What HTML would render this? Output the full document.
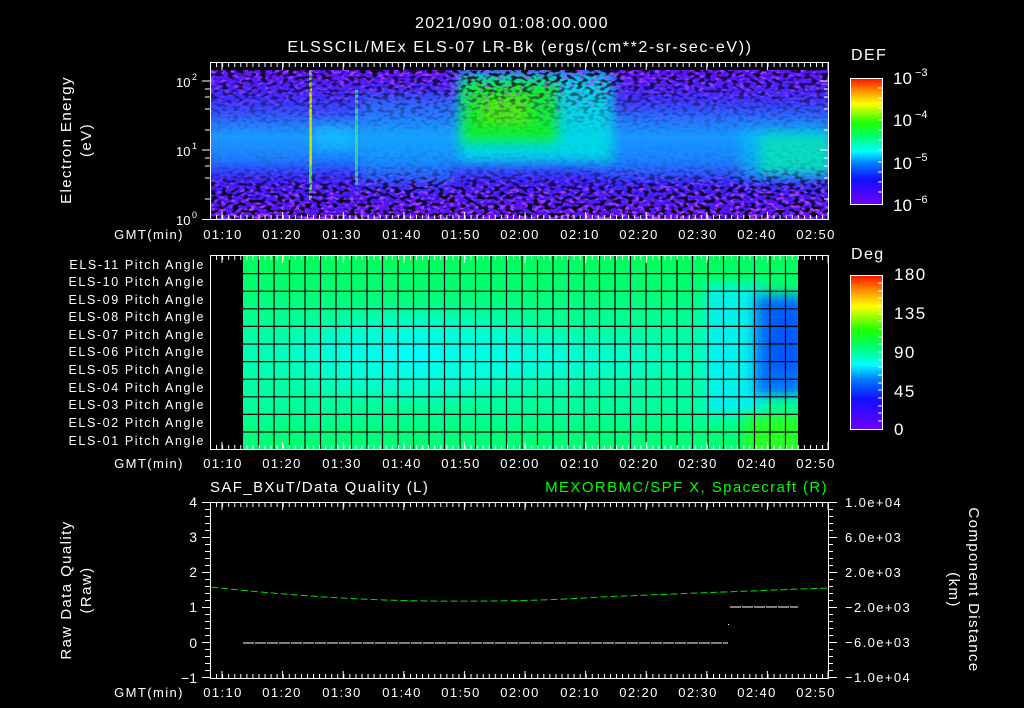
<!DOCTYPE html>
<html><head><meta charset="utf-8"><style>
html,body{margin:0;padding:0;background:#000;}
svg{display:block;font-family:"Liberation Sans",sans-serif;}
text{fill:#fff;}
.ls{letter-spacing:1.4px;}
</style></head><body>
<svg width="1024" height="708" viewBox="0 0 1024 708" xmlns="http://www.w3.org/2000/svg">
<defs>
<linearGradient id="cbar" x1="0" y1="1" x2="0" y2="0">
<stop offset="0" stop-color="#7000ff"/><stop offset="0.2" stop-color="#1010ff"/><stop offset="0.33" stop-color="#0080ff"/><stop offset="0.42" stop-color="#00ffff"/><stop offset="0.55" stop-color="#00ff60"/><stop offset="0.65" stop-color="#20ff00"/><stop offset="0.8" stop-color="#ffff00"/><stop offset="0.9" stop-color="#ff9000"/><stop offset="1" stop-color="#ff1000"/>
</linearGradient>
<linearGradient id="specbase" x1="0" y1="0" x2="0" y2="1">
<stop offset="0" stop-color="#5a10ff"/><stop offset="0.2" stop-color="#3a30ff"/><stop offset="0.45" stop-color="#2090ff"/><stop offset="0.6" stop-color="#2070ff"/><stop offset="0.75" stop-color="#3820ff"/><stop offset="1" stop-color="#6010ff"/>
</linearGradient>
<filter id="bl" x="-0.5" y="-0.5" width="2" height="2"><feGaussianBlur stdDeviation="6"/></filter>
<filter id="bl2" x="-0.5" y="-0.5" width="2" height="2"><feGaussianBlur stdDeviation="10"/></filter>
<filter id="sp" x="0" y="0" width="1" height="1">
<feTurbulence type="fractalNoise" baseFrequency="0.18 0.3" numOctaves="1" seed="7"/>
<feColorMatrix type="matrix" values="0 0 0 0 0  0 0 0 0 0  0 0 0 0 0  9 0 0 0 -4.5"/>
</filter>
<filter id="sp2" x="0" y="0" width="1" height="1">
<feTurbulence type="fractalNoise" baseFrequency="0.2 0.35" numOctaves="1" seed="21"/>
<feColorMatrix type="matrix" values="0 0 0 0 0.45  0 0 0 0 0.05  0 0 0 0 1  9 0 0 0 -4.7"/>
</filter>
<linearGradient id="spmask" x1="0" y1="0" x2="0" y2="1">
<stop offset="0" stop-color="#fff" stop-opacity="0.9"/><stop offset="0.25" stop-color="#fff" stop-opacity="0.3"/><stop offset="0.45" stop-color="#fff" stop-opacity="0"/><stop offset="0.65" stop-color="#fff" stop-opacity="0.1"/><stop offset="0.8" stop-color="#fff" stop-opacity="0.8"/><stop offset="1" stop-color="#fff" stop-opacity="1"/>
</linearGradient>
<mask id="m1"><rect x="211" y="70" width="618" height="149" fill="url(#spmask)"/></mask>
<clipPath id="c1"><rect x="211" y="70" width="618" height="149"/></clipPath>
<clipPath id="c2"><rect x="243" y="256" width="555" height="193"/></clipPath>
<linearGradient id="pabase" x1="0" y1="0" x2="0" y2="1">
<stop offset="0" stop-color="#00ff58"/><stop offset="0.2" stop-color="#00ff78"/><stop offset="0.5" stop-color="#00ffb8"/><stop offset="0.8" stop-color="#00ff98"/><stop offset="1" stop-color="#00ff70"/>
</linearGradient>
<radialGradient id="pacyan" cx="0.5" cy="0.5" r="0.5">
<stop offset="0" stop-color="#00ffff"/><stop offset="0.6" stop-color="#00ffe8" stop-opacity="0.6"/><stop offset="1" stop-color="#00ffc0" stop-opacity="0"/>
</radialGradient>
<pattern id="tkTop" x="210" y="0" width="6.06" height="708" patternUnits="userSpaceOnUse"><rect x="0" y="0" width="1" height="708" fill="#fff"/></pattern>
</defs>

<!-- Titles -->
<text x="512" y="28" font-size="16" text-anchor="middle" class="ls">2021/090 01:08:00.000</text>
<text x="520" y="52" font-size="16" text-anchor="middle" style="letter-spacing:1.6px">ELSSCIL/MEx ELS-07 LR-Bk  (ergs/(cm**2-sr-sec-eV))</text>

<!-- Panel 1 spectrogram -->
<g clip-path="url(#c1)">
<rect x="211" y="70" width="618" height="149" fill="url(#specbase)"/>
<rect x="211" y="122" width="245" height="40" fill="#10b0ff" opacity="0.3" filter="url(#bl)"/>
<rect x="315" y="125" width="40" height="25" fill="#10d0ff" opacity="0.6" filter="url(#bl)"/>
<rect x="360" y="95" width="95" height="90" fill="#10b0ff" opacity="0.4" filter="url(#bl)"/>
<rect x="600" y="115" width="229" height="60" fill="#10a0ff" opacity="0.45" filter="url(#bl2)"/>
<rect x="458" y="72" width="155" height="90" fill="#00d8e8" filter="url(#bl)"/>
<rect x="462" y="80" width="95" height="62" fill="#10f030" filter="url(#bl)"/>
<rect x="480" y="95" width="50" height="30" fill="#70f000" opacity="0.6" filter="url(#bl)"/>
<rect x="760" y="135" width="69" height="38" fill="#10f090" filter="url(#bl)"/>
<rect x="740" y="128" width="89" height="52" fill="#00d0f0" opacity="0.5" filter="url(#bl)"/>
<rect x="309" y="70" width="3" height="130" fill="#40e840"/>
<rect x="310" y="85" width="1.5" height="80" fill="#d0f000"/>
<rect x="355" y="90" width="3" height="95" fill="#30e8a0" opacity="0.8"/>
<rect x="211" y="70" width="618" height="149" filter="url(#sp2)" mask="url(#m1)"/>
<rect x="211" y="70" width="618" height="149" fill="#000" filter="url(#sp)" mask="url(#m1)"/>
</g>
<!-- frame 1 -->
<rect x="210.5" y="62.5" width="618" height="157" fill="none" stroke="#fff"/>
<rect x="210" y="63" width="619" height="4" fill="url(#tkTop)"/>
<rect x="210" y="215" width="619" height="4" fill="url(#tkTop)"/>
<g stroke="#fff">
<path d="M222 63v7M282.6 63v7M343.2 63v7M403.8 63v7M464.4 63v7M525 63v7M585.6 63v7M646.2 63v7M706.8 63v7M767.4 63v7M828 63v7"/>
<path d="M222 219v-7M282.6 219v-7M343.2 219v-7M403.8 219v-7M464.4 219v-7M525 219v-7M585.6 219v-7M646.2 219v-7M706.8 219v-7M767.4 219v-7M828 219v-7"/>
<path d="M202 81h9M202 150h9M202 219.5h9M205 89h5M205 97h5M205 109h5M205 130h5M205 158h5M205 166h5M205 178h5M205 199h5"/>
<path d="M829 81h-9M829 150h-9M829 89h-5M829 97h-5M829 109h-5M829 130h-5M829 158h-5M829 166h-5M829 178h-5M829 199h-5"/>
</g>
<text x="176" y="87" font-size="13">10</text><text x="192" y="80" font-size="9">2</text>
<text x="176" y="156" font-size="13">10</text><text x="192" y="149" font-size="9">1</text>
<text x="176" y="225" font-size="13">10</text><text x="192" y="218" font-size="9">0</text>
<text transform="translate(71,140) rotate(-90)" font-size="15" text-anchor="middle" class="ls">Electron Energy</text>
<text transform="translate(91,140) rotate(-90)" font-size="15" text-anchor="middle" class="ls">(eV)</text>
<g font-size="13" text-anchor="middle" class="ls">
<text x="149" y="239">GMT(min)</text>
<text x="223" y="239">01:10</text><text x="282" y="239">01:20</text><text x="342" y="239">01:30</text><text x="402" y="239">01:40</text><text x="461" y="239">01:50</text><text x="520" y="239">02:00</text><text x="580" y="239">02:10</text><text x="639" y="239">02:20</text><text x="698" y="239">02:30</text><text x="757" y="239">02:40</text><text x="816" y="239">02:50</text>
</g>
<!-- colorbar 1 -->
<text x="851" y="60" font-size="16" class="ls">DEF</text>
<rect x="850.5" y="78.5" width="32" height="126" fill="url(#cbar)" stroke="#fff"/>
<g stroke="#fff"><path d="M883 88h-5M883 98h-5M883 108h-5M883 120h-5M883 130h-5M883 140h-5M883 150h-5M883 162h-5M883 172h-5M883 182h-5M883 192h-5"/></g>
<g font-size="17"><text x="893" y="84">10</text><text x="915" y="76" font-size="11">−3</text>
<text x="893" y="126">10</text><text x="915" y="118" font-size="11">−4</text>
<text x="893" y="169">10</text><text x="915" y="161" font-size="11">−5</text>
<text x="893" y="211">10</text><text x="915" y="203" font-size="11">−6</text></g>

<!-- Panel 2 pitch angle -->
<g clip-path="url(#c2)">
<rect x="243" y="256" width="555" height="193" fill="url(#pabase)"/>
<ellipse cx="420" cy="355" rx="170" ry="55" fill="url(#pacyan)"/>
<ellipse cx="560" cy="360" rx="140" ry="35" fill="url(#pacyan)" opacity="0.5"/>
<rect x="705" y="285" width="60" height="130" fill="#00f0ff" opacity="0.8" filter="url(#bl)"/>
<rect x="755" y="295" width="50" height="100" fill="#0070ff" filter="url(#bl)"/>
<rect x="770" y="310" width="30" height="60" fill="#0058ff" filter="url(#bl)"/>
<rect x="745" y="415" width="60" height="40" fill="#30ff10" opacity="0.8" filter="url(#bl)"/>
</g>
<g stroke="#000" stroke-width="1.2">
<path d="M243 273.6h555M243 291.2h555M243 308.8h555M243 326.4h555M243 344h555M243 361.6h555M243 379.2h555M243 396.8h555M243 414.4h555M243 432h555"/>
<path d="M258.5 256v193M274 256v193M289.5 256v193M305 256v193M320.5 256v193M336 256v193M351.5 256v193M367 256v193M382.5 256v193M398 256v193M413.5 256v193M429 256v193M444.5 256v193M460 256v193M475.5 256v193M491 256v193M506.5 256v193M522 256v193M537.5 256v193M553 256v193M568.5 256v193M584 256v193M599.5 256v193M615 256v193M630.5 256v193M646 256v193M661.5 256v193M677 256v193M692.5 256v193M708 256v193M723.5 256v193M739 256v193M754.5 256v193M770 256v193M785.5 256v193"/>
</g>
<rect x="210.5" y="255.5" width="618" height="194" fill="none" stroke="#fff"/>
<rect x="210" y="256" width="619" height="4" fill="url(#tkTop)"/>
<rect x="210" y="445" width="619" height="4" fill="url(#tkTop)"/>
<g stroke="#fff"><path d="M222 256v7M282.6 256v7M343.2 256v7M403.8 256v7M464.4 256v7M525 256v7M585.6 256v7M646.2 256v7M706.8 256v7M767.4 256v7M828 256v7M222 449v-7M282.6 449v-7M343.2 449v-7M403.8 449v-7M464.4 449v-7M525 449v-7M585.6 449v-7M646.2 449v-7M706.8 449v-7M767.4 449v-7M828 449v-7"/></g>
<g font-size="12.5" text-anchor="end" style="letter-spacing:1.6px">
<text x="205" y="269">ELS-11 Pitch Angle</text><text x="205" y="286">ELS-10 Pitch Angle</text><text x="205" y="304">ELS-09 Pitch Angle</text><text x="205" y="321">ELS-08 Pitch Angle</text><text x="205" y="339">ELS-07 Pitch Angle</text><text x="205" y="356">ELS-06 Pitch Angle</text><text x="205" y="374">ELS-05 Pitch Angle</text><text x="205" y="392">ELS-04 Pitch Angle</text><text x="205" y="409">ELS-03 Pitch Angle</text><text x="205" y="427">ELS-02 Pitch Angle</text><text x="205" y="445">ELS-01 Pitch Angle</text>
</g>
<g font-size="13" text-anchor="middle" class="ls">
<text x="149" y="468">GMT(min)</text>
<text x="223" y="468">01:10</text><text x="282" y="468">01:20</text><text x="342" y="468">01:30</text><text x="402" y="468">01:40</text><text x="461" y="468">01:50</text><text x="520" y="468">02:00</text><text x="580" y="468">02:10</text><text x="639" y="468">02:20</text><text x="698" y="468">02:30</text><text x="757" y="468">02:40</text><text x="816" y="468">02:50</text>
</g>
<text x="851" y="259" font-size="16" class="ls">Deg</text>
<rect x="850.5" y="275.5" width="32" height="154" fill="url(#cbar)" stroke="#fff"/>
<g stroke="#fff"><path d="M883 283h-5M883 291h-5M883 298h-5M883 306h-5M883 314h-5M883 321h-5M883 329h-5M883 337h-5M883 344h-5M883 352h-5M883 360h-5M883 367h-5M883 375h-5M883 383h-5M883 390h-5M883 398h-5M883 406h-5M883 413h-5M883 421h-5"/></g>
<g font-size="17" class="ls"><text x="894" y="280">180</text><text x="894" y="319">135</text><text x="894" y="358">90</text><text x="894" y="397">45</text><text x="894" y="435">0</text></g>

<!-- Panel 3 -->
<text x="210" y="492" font-size="15" class="ls">SAF_BXuT/Data Quality (L)</text>
<text x="828" y="492" font-size="15" text-anchor="end" class="ls" style="fill:#00ff00">MEXORBMC/SPF X, Spacecraft (R)</text>
<rect x="210.5" y="502.5" width="618" height="176" fill="none" stroke="#fff"/>
<rect x="210" y="503" width="619" height="4" fill="url(#tkTop)"/>
<rect x="210" y="674" width="619" height="4" fill="url(#tkTop)"/>
<g stroke="#fff">
<path d="M222 503v7M282.6 503v7M343.2 503v7M403.8 503v7M464.4 503v7M525 503v7M585.6 503v7M646.2 503v7M706.8 503v7M767.4 503v7M828 503v7M222 678v-7M282.6 678v-7M343.2 678v-7M403.8 678v-7M464.4 678v-7M525 678v-7M585.6 678v-7M646.2 678v-7M706.8 678v-7M767.4 678v-7M828 678v-7"/>
<path d="M202 502.5h9M202 537.5h9M202 572.5h9M202 607.5h9M202 642.5h9M202 677.5h9M205 509.5h5M205 516.5h5M205 523.5h5M205 530.5h5M205 544.5h5M205 551.5h5M205 558.5h5M205 565.5h5M205 579.5h5M205 586.5h5M205 593.5h5M205 600.5h5M205 614.5h5M205 621.5h5M205 628.5h5M205 635.5h5M205 649.5h5M205 656.5h5M205 663.5h5M205 670.5h5"/>
<path d="M837 502.5h-9M837 537.5h-9M837 572.5h-9M837 607.5h-9M837 642.5h-9M837 677.5h-9M833 509.5h-5M833 516.5h-5M833 523.5h-5M833 530.5h-5M833 544.5h-5M833 551.5h-5M833 558.5h-5M833 565.5h-5M833 579.5h-5M833 586.5h-5M833 593.5h-5M833 600.5h-5M833 614.5h-5M833 621.5h-5M833 628.5h-5M833 635.5h-5M833 649.5h-5M833 656.5h-5M833 663.5h-5M833 670.5h-5"/>
</g>
<path d="M211 587 Q 330 600 430 601 T 600 597 Q 720 592 829 588" fill="none" stroke="#00e000" stroke-width="1" stroke-dasharray="7 3"/>
<path d="M243 643H728" stroke="#fff" stroke-dasharray="11 1"/>
<path d="M730 607H798" stroke="#fff" stroke-dasharray="11 1"/>
<rect x="728" y="624" width="1" height="1" fill="#fff"/>
<g font-size="14" text-anchor="end"><text x="197" y="507">4</text><text x="197" y="542">3</text><text x="197" y="577">2</text><text x="197" y="612">1</text><text x="197" y="648">0</text><text x="197" y="683">−1</text></g>
<g font-size="13" class="ls"><text x="845" y="507">1.0e+04</text><text x="845" y="542">6.0e+03</text><text x="845" y="577">2.0e+03</text><text x="845" y="612">−2.0e+03</text><text x="845" y="647">−6.0e+03</text><text x="845" y="682">−1.0e+04</text></g>
<text transform="translate(969,590) rotate(90)" font-size="15" text-anchor="middle" class="ls">Component Distance</text>
<text transform="translate(949,590) rotate(90)" font-size="15" text-anchor="middle" class="ls">(km)</text>
<text transform="translate(71,590) rotate(-90)" font-size="15" text-anchor="middle" class="ls">Raw Data Quality</text>
<text transform="translate(91,590) rotate(-90)" font-size="15" text-anchor="middle" class="ls">(Raw)</text>
<g font-size="13" text-anchor="middle" class="ls">
<text x="149" y="697">GMT(min)</text>
<text x="223" y="697">01:10</text><text x="282" y="697">01:20</text><text x="342" y="697">01:30</text><text x="402" y="697">01:40</text><text x="461" y="697">01:50</text><text x="520" y="697">02:00</text><text x="580" y="697">02:10</text><text x="639" y="697">02:20</text><text x="698" y="697">02:30</text><text x="757" y="697">02:40</text><text x="816" y="697">02:50</text>
</g>
</svg>
</body></html>
